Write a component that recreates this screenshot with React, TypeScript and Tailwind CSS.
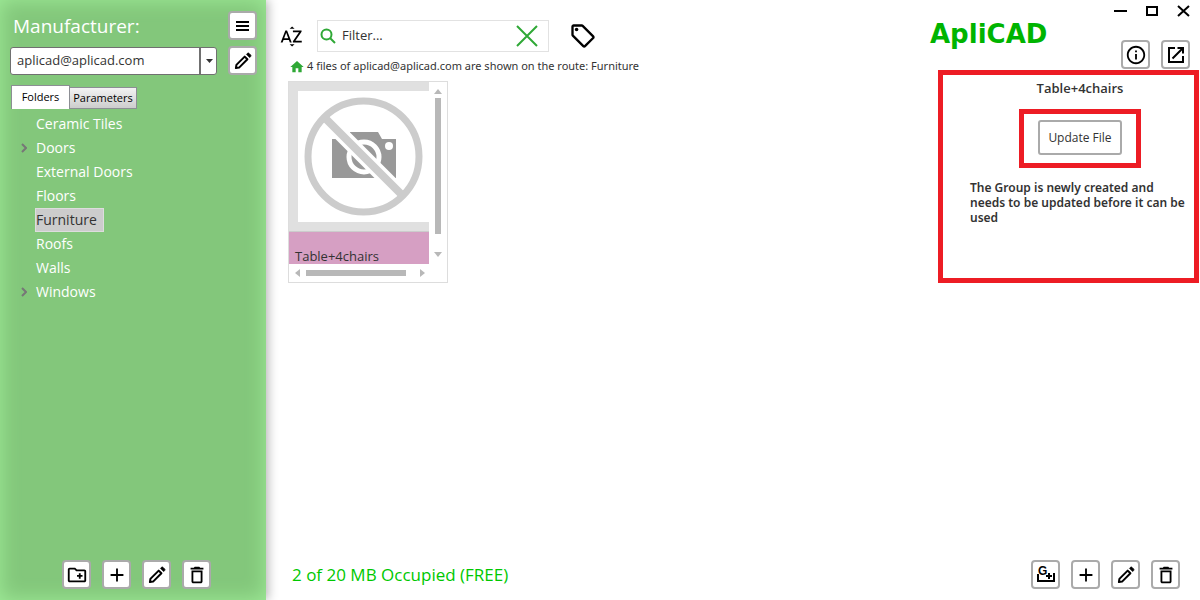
import { useState } from "react";
import type { ReactNode } from "react";
import {
  MdAdd,
  MdHome,
  MdOutlineCreateNewFolder,
  MdOutlineDelete,
  MdOutlineInfo,
  MdOutlineLocalOffer,
  MdSortByAlpha,
} from "react-icons/md";

const folders = [
  { name: "Ceramic Tiles", hasChildren: false },
  { name: "Doors", hasChildren: true },
  { name: "External Doors", hasChildren: false },
  { name: "Floors", hasChildren: false },
  { name: "Furniture", hasChildren: false },
  { name: "Roofs", hasChildren: false },
  { name: "Walls", hasChildren: false },
  { name: "Windows", hasChildren: true },
];

function IconButton({ label, children }: { label: string; children: ReactNode }) {
  return (
    <button
      type="button"
      aria-label={label}
      className="flex h-[29px] w-[29px] shrink-0 items-center justify-center rounded-[4px] border-2 border-[#aaaaaa] bg-white text-black hover:bg-gray-100"
    >
      {children}
    </button>
  );
}

function PencilIcon() {
  return (
    <svg width="20" height="20" viewBox="0 0 20 20" fill="none">
      <path
        d="M2.900 17.100l.5-3.200 8.300-8.300 2.700 2.700-8.300 8.300z"
        stroke="currentColor"
        strokeWidth="2"
        strokeLinejoin="round"
      />
      <path
        d="M13.500 3.300l.9-.9c.5-.5 1.200-.5 1.700 0l1.500 1.500c.5.5.5 1.200 0 1.700l-.9.9z"
        fill="currentColor"
        stroke="currentColor"
        strokeWidth="0.800"
      />
    </svg>
  );
}

function MenuIcon() {
  return (
    <svg width="14" height="12" viewBox="0 0 14 12" stroke="currentColor" strokeWidth="2">
      <path d="M0 2h13M0 6h13M0 10h13" />
    </svg>
  );
}

function OpenIcon() {
  return (
    <svg width="18" height="18" viewBox="0 0 18 18" fill="none" stroke="currentColor" strokeWidth="2">
      <path d="M8 2H2v14h14v-6" />
      <path d="M10.500 2H16v5.500M16 2L5.500 12.500" />
    </svg>
  );
}

function GroupIcon() {
  return (
    <svg width="22" height="24" viewBox="0 0 22 24" fill="none" stroke="currentColor" strokeWidth="2">
      <path d="M3 11v7h16v-8" />
      <text
        x="3"
        y="12"
        fill="currentColor"
        stroke="none"
        className="font-['Liberation_Sans',sans-serif] text-[12px] leading-none font-bold"
      >
        G
      </text>
      <path d="M14 10v6M11 13h6" />
    </svg>
  );
}

function NoImage() {
  return (
    <svg width="132" height="131" viewBox="0 0 132 131" className="block shrink-0 bg-white">
      <path d="M34 48h18v-7h28l4 7h14v39H34z" fill="#999999" />
      <circle cx="91" cy="55" r="4" fill="#ffffff" />
      <circle cx="66" cy="66" r="15" fill="#999999" stroke="#ffffff" strokeWidth="5" />
      <path d="M27 27l77 77" stroke="#ffffff" strokeWidth="15" />
      <circle cx="65.500" cy="65.500" r="55.500" fill="none" stroke="#cccccc" strokeWidth="7" />
      <path d="M27 27l77 77" stroke="#cccccc" strokeWidth="8" />
    </svg>
  );
}

function Sidebar() {
  const [selected, setSelected] = useState("Furniture");

  return (
    <aside className="relative z-10 flex w-[266px] shrink-0 flex-col bg-[#83c77b] py-[11px] pr-[9px] pl-[10px] shadow-[inset_0_0_20px_#9fec98,2px_0_10px_rgba(0,0,0,0.3)]">
      <div className="flex h-[29px] items-center justify-between">
        <label htmlFor="manufacturer" className="pl-[3px] text-[19px] leading-7 text-white">
          Manufacturer:
        </label>
        <IconButton label="Menu">
          <MenuIcon />
        </IconButton>
      </div>

      <div className="mt-[6px] flex items-center gap-[11px]">
        <div className="relative flex-1">
          <select
            id="manufacturer"
            className="block h-7 w-full appearance-none rounded-[3px] border border-[#707070] bg-white px-[6px] text-[13px] text-[#333333]"
          >
            <option>aplicad@aplicad.com</option>
          </select>
          <span className="pointer-events-none absolute inset-y-0 right-0 flex w-[18px] items-center justify-center border-l-2 border-[#707070]">
            <svg width="7" height="4" viewBox="0 0 7 4">
              <path d="M0 0h7L3.500 4z" fill="#333333" />
            </svg>
          </span>
        </div>
        <IconButton label="Edit manufacturer">
          <PencilIcon />
        </IconButton>
      </div>

      <div role="tablist" className="mt-[10px] flex items-end pl-px text-[11px] text-black">
        <button
          type="button"
          role="tab"
          aria-selected="true"
          className="h-6 w-[59px] border border-b-0 border-[#8c8e94] bg-white"
        >
          Folders
        </button>
        <button
          type="button"
          role="tab"
          aria-selected="false"
          className="h-[22px] w-[67px] border border-l-0 border-[#8c8e94] bg-linear-to-b from-[#f3f3f3] to-[#cdcdcd]"
        >
          Parameters
        </button>
      </div>

      {/* Folder tree */}
      <ul className="mt-[3px] flex-1 pl-2">
        {folders.map((folder) => (
          <li key={folder.name} className="flex h-6 items-center">
            <span className="flex w-[17px] shrink-0 pl-[3px]">
              {folder.hasChildren && (
                <svg width="6" height="10" viewBox="0 0 6 10" fill="none" stroke="#777777" strokeWidth="2">
                  <path d="M1 1l4 4-4 4" />
                </svg>
              )}
            </span>
            <button
              type="button"
              onClick={() => setSelected(folder.name)}
              className={`flex h-6 items-center border pr-[6px] text-[14px] leading-5 ${
                folder.name === selected
                  ? "border-[#dddddd] bg-[#cccccc] text-[#333333]"
                  : "border-transparent text-white"
              }`}
            >
              {folder.name}
            </button>
          </li>
        ))}
      </ul>

      <div className="flex gap-[11px] pl-[52px]">
        <IconButton label="New folder">
          <MdOutlineCreateNewFolder size={22} />
        </IconButton>
        <IconButton label="Add">
          <MdAdd size={22} />
        </IconButton>
        <IconButton label="Edit folder">
          <PencilIcon />
        </IconButton>
        <IconButton label="Delete folder">
          <MdOutlineDelete size={22} />
        </IconButton>
      </div>
    </aside>
  );
}

function Toolbar() {
  return (
    <div className="flex items-center">
      <button type="button" aria-label="Sort by name" className="text-black">
        <MdSortByAlpha size={25} />
      </button>
      <div className="ml-[13px] flex h-8 w-[232px] items-center border border-[#e2e2e2] pr-2 pl-[2px]">
        <svg width="16" height="16" viewBox="0 0 16 16" fill="none" stroke="#2fa836" strokeWidth="2" className="shrink-0">
          <circle cx="6.500" cy="6.500" r="5" />
          <path d="M10 10l5 5" />
        </svg>
        <input
          type="text"
          aria-label="Filter"
          placeholder="Filter..."
          className="min-w-0 flex-1 px-[6px] text-[13px] text-[#333333] outline-none placeholder:text-[#333333]"
        />
        <button type="button" aria-label="Clear filter">
          <svg width="26" height="22" viewBox="0 0 26 22" fill="none" stroke="#2fa836" strokeWidth="2">
            <path d="M3 1l20 20M23 1L3 21" />
          </svg>
        </button>
      </div>
      <button type="button" aria-label="Tags" className="ml-5 text-black">
        <MdOutlineLocalOffer size={28} />
      </button>
    </div>
  );
}

function FileCard() {
  return (
    <div className="ml-[9px] grid h-[202px] w-40 grid-cols-[140px_1fr] grid-rows-[182px_1fr] border border-[#dddddd]">
      <div className="flex flex-col overflow-hidden bg-[#e0e0e0]">
        <div className="py-[9px] pl-[9px]">
          <NoImage />
        </div>
        <div className="flex-1 border-t border-[#cccccc] bg-[#d69fc3] px-[6px] pt-[14px] text-[13px] leading-5 text-[#333333]">
          Table+4chairs
        </div>
      </div>
      <div className="flex flex-col items-center justify-between py-[7px] pr-px">
        <svg width="8" height="5" viewBox="0 0 8 5" fill="#b8b8b8">
          <path d="M0 5h8L4 0z" />
        </svg>
        <div className="mt-1 mb-[18px] w-[6px] flex-1 bg-[#b8b8b8]" />
        <svg width="8" height="5" viewBox="0 0 8 5" fill="#b8b8b8">
          <path d="M0 0h8L4 5z" />
        </svg>
      </div>
      <div className="flex items-center pl-[6px] pr-1">
        <svg width="5" height="8" viewBox="0 0 5 8" fill="#b8b8b8">
          <path d="M5 0v8L0 4z" />
        </svg>
        <div className="mr-[14px] ml-[6px] h-[6px] flex-1 bg-[#b8b8b8]" />
        <svg width="5" height="8" viewBox="0 0 5 8" fill="#b8b8b8">
          <path d="M0 0v8l5-4z" />
        </svg>
      </div>
    </div>
  );
}

function WindowControls() {
  return (
    <div className="flex items-center justify-end gap-[19px] pr-[10px] text-black">
      <button type="button" aria-label="Minimize">
        <svg width="13" height="12" viewBox="0 0 13 12" stroke="currentColor" strokeWidth="2">
          <path d="M0 6h13" />
        </svg>
      </button>
      <button type="button" aria-label="Maximize">
        <svg width="12" height="12" viewBox="0 0 12 12" fill="none" stroke="currentColor" strokeWidth="2">
          <path d="M1 2h10v8H1z" />
        </svg>
      </button>
      <button type="button" aria-label="Close">
        <svg width="13" height="12" viewBox="0 0 13 12" stroke="currentColor" strokeWidth="2">
          <path d="M1 1l11 10M12 1L1 11" />
        </svg>
      </button>
    </div>
  );
}

function DetailPanel() {
  return (
    <section className="flex w-[270px] shrink-0 flex-col pt-[5px]">
      <WindowControls />
      <div className="flex h-[53px] items-end justify-between pr-[10px]">
        <div className="mb-[18px] font-['DejaVu_Sans',sans-serif] text-[26px] leading-9 font-bold text-[#00b400]">
          ApliCAD
        </div>
        <div className="mb-px flex gap-[11px]">
          <IconButton label="Information">
            <MdOutlineInfo size={22} />
          </IconButton>
          <IconButton label="Open in new window">
            <OpenIcon />
          </IconButton>
        </div>
      </div>
      <div className="mr-px ml-2 flex h-[213px] flex-col items-center border-[5px] border-[#ed1c24] pt-[3px] pr-1 pl-[27px] text-[#333333]">
        <h2 className="text-[13px] leading-5 font-semibold">Table+4chairs</h2>
        <div className="mt-[11px] border-[5px] border-[#ed1c24] px-[14px] pt-[6px] pb-2">
          <button
            type="button"
            className="block h-[35px] w-[84px] rounded-[3px] border-2 border-[#aaaaaa] bg-white text-[12px] hover:bg-gray-100"
          >
            Update File
          </button>
        </div>
        <p className="mt-3 w-full font-['Noto_Sans',sans-serif] text-[12px] leading-[15px] font-semibold">
          The Group is newly created and needs to be updated before it can be used
        </p>
      </div>
    </section>
  );
}

export default function App() {
  return (
    <div className="flex min-h-screen bg-white font-['Open_Sans','Noto_Sans',sans-serif]">
      <Sidebar />
      <main className="flex min-w-0 flex-1 flex-col pb-[11px]">
        <div className="flex flex-1 justify-between">
          <div className="min-w-0 flex-1 pt-5 pl-[13px]">
            <Toolbar />
            <div className="my-[5px] flex h-[19px] items-center gap-[2px] pl-[10px] font-['Noto_Sans',sans-serif] text-[11px] text-[#333333]">
              <MdHome size={16} className="shrink-0 text-[#2fa836]" />
              4 files of aplicad@aplicad.com are shown on the route: Furniture
            </div>
            <FileCard />
          </div>
          <DetailPanel />
        </div>

        <footer className="flex items-center justify-between pr-5 pl-[26px]">
          <p className="text-[17px] leading-6 text-[#00c800]">2 of 20 MB Occupied (FREE)</p>
          <div className="flex gap-[11px]">
            <IconButton label="Add group">
              <GroupIcon />
            </IconButton>
            <IconButton label="Add file">
              <MdAdd size={22} />
            </IconButton>
            <IconButton label="Edit file">
              <PencilIcon />
            </IconButton>
            <IconButton label="Delete file">
              <MdOutlineDelete size={22} />
            </IconButton>
          </div>
        </footer>
      </main>
    </div>
  );
}
